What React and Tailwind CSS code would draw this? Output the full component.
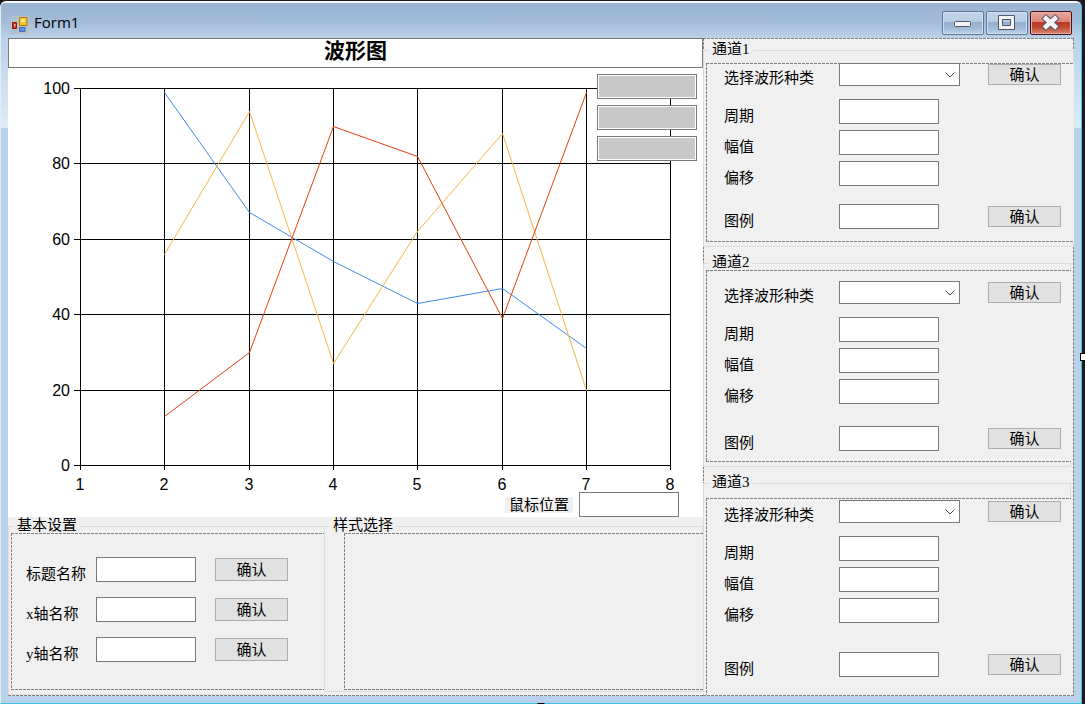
import { useId, useState } from "react";

const buttonClass = "w-[73px] border border-[#adadad] bg-[#e1e1e1] text-[15px] leading-4 hover:border-[#0078d7] hover:bg-[#e5f1fb]";
const inputClass = "h-[25px] w-[100px] border border-[#7a7a7a] bg-white px-1 text-[15px] outline-none";

// 3px on / 1px off outlines
const dashedPanel =
  "[background-image:repeating-linear-gradient(90deg,#828282_0_3px,transparent_3px_4px),repeating-linear-gradient(180deg,#828282_0_3px,transparent_3px_4px),repeating-linear-gradient(90deg,#828282_0_3px,transparent_3px_4px)] [background-position:top_left,top_left,bottom_left] [background-size:100%_1px,1px_100%,100%_1px] bg-no-repeat";
const dashedOpen =
  "[background-image:repeating-linear-gradient(90deg,#828282_0_3px,transparent_3px_4px),repeating-linear-gradient(180deg,#828282_0_3px,transparent_3px_4px)] [background-size:100%_1px,1px_100%] bg-no-repeat";
const dashedBottom =
  "[background-image:repeating-linear-gradient(90deg,#828282_0_3px,transparent_3px_4px)] [background-position:bottom_left] [background-size:100%_1px] bg-no-repeat";
const dashedFrame =
  "[background-image:repeating-linear-gradient(90deg,#828282_0_3px,transparent_3px_4px),repeating-linear-gradient(180deg,#828282_0_3px,transparent_3px_4px),repeating-linear-gradient(180deg,#828282_0_3px,transparent_3px_4px),repeating-linear-gradient(90deg,#828282_0_3px,transparent_3px_4px)] [background-position:top_left,top_left,top_right,bottom_left] [background-size:100%_1px,1px_100%,1px_100%,100%_1px] bg-no-repeat";

const series = [
  { color: "#418cf0", values: [99, 67, 54, 43, 47, 31] },
  { color: "#fcb441", values: [56, 94, 27, 62, 88, 20] },
  { color: "#e0400a", values: [13, 30, 90, 82, 39, 99] },
];

const channels = [
  { name: "通道1", group: "-mr-px border-b pb-1", panel: "mt-1.5 pb-[13px]", outline: dashedPanel, last: "mt-[18px]" },
  { name: "通道2", group: "mr-0.5 border-b pb-1", panel: "pt-[11px] pb-[11px]", outline: dashedPanel, last: "mt-[22px]" },
  { name: "通道3", group: "mr-0.5 flex-1", panel: "mt-2 flex-1 pt-0.5", outline: dashedOpen, last: "mt-[29px]" },
];

export default function App() {
  return (
    <div className="flex min-h-screen flex-col bg-[#1c1a1e] pt-px pr-[3px] font-['Liberation_Serif','Noto_Sans_CJK_SC',serif] text-[15px] text-black">
      <div className="relative flex flex-1 flex-col rounded-t-md border-t-2 border-r border-b border-l border-t-[#f4f8fc] border-r-[#3cc3e0] border-b-[#3cc3e0] border-l-[#e4edf6] bg-[#b9d1ea]">
        <TitleBar />
        <div className="flex flex-1 bg-[linear-gradient(180deg,#b9d1ea_0,#dfebf7_90px,#b9d1ea_90px)] px-[7px] pb-[7px]">
          <div className="flex flex-1 bg-[#f0f0f0]">
            <main className="flex min-w-0 flex-1 flex-col">
              <input aria-label="标题" defaultValue="波形图" className="h-[30px] w-full border border-[#7a7a7a] bg-white pb-0.5 text-center text-[21px] font-bold outline-none" />
              <Chart />
              <div className={`flex flex-1 ${dashedBottom}`}>
                <BasicSettings />
                <StylePicker />
              </div>
            </main>
            <aside className={`flex w-[371px] flex-col gap-[9px] px-px pt-[5px] pb-px ${dashedFrame}`}>
              {channels.map((c) => <Channel key={c.name} {...c} />)}
            </aside>
          </div>
        </div>
        <span className="absolute top-1/2 -right-1 h-2 w-[5px] border border-r-0 border-black bg-white" />
        <span className="absolute -bottom-px left-1/2 h-px w-[7px] -translate-x-1/2 bg-black" />
      </div>
    </div>
  );
}

function TitleBar() {
  return (
    <header className="flex h-[35px] items-center rounded-t bg-linear-to-b from-[#98b3d2] via-[#a2bbd7] to-[#b9d1ea] pr-[9px] pl-2.5">
      <FormIcon />
      <h1 className="ml-[5px] flex-1 pt-[3px] font-['Open_Sans',sans-serif] text-[15px] leading-5">Form1</h1>
      <div className="flex gap-0.5 pt-1">
        <CaptionButton label="最小化">
          <rect x="11.5" y="9.5" width="16" height="5" rx="1" fill="#f4f4f4" stroke="#535666" />
        </CaptionButton>
        <CaptionButton label="最大化">
          <path d="M11.5 3.5h16v14h-16z M15.5 7.5v6h8v-6z" fill="#f4f4f4" fillRule="evenodd" stroke="#535666" strokeLinejoin="round" />
        </CaptionButton>
        <CaptionButton label="关闭" danger>
          <path d="M15 6.500l9 8M24 6.500l-9 8" fill="none" stroke="#535666" strokeWidth="6.5" strokeLinecap="square" />
          <path d="M15 6.500l9 8M24 6.500l-9 8" fill="none" stroke="#f6f6f6" strokeWidth="4.5" strokeLinecap="square" />
        </CaptionButton>
      </div>
    </header>
  );
}

function CaptionButton({ label, danger, children }) {
  const tone = danger
    ? "border-[#43141c] bg-[linear-gradient(180deg,#e9a89d_0%,#d9847a_45%,#b73a25_46%,#c04a32_70%,#d98873_100%)] shadow-[inset_0_0_0_1px_#e9aa9f]"
    : "border-[#62768f] bg-[linear-gradient(180deg,#c2d6ea_0%,#b4cce3_45%,#95b0cc_46%,#a2bcd8_75%,#bad2ec_100%)] shadow-[inset_0_0_0_1px_#cfe0f1]";
  return (
    <button aria-label={label} className={`h-6 w-[42px] rounded-xs border ${tone}`}>
      <svg viewBox="0 0 40 22" className="block h-[22px] w-10">{children}</svg>
    </button>
  );
}

function FormIcon() {
  return (
    <svg viewBox="0 0 18 18" className="mt-2 h-[18px] w-[18px]" aria-hidden="true">
      <path d="M0 0h18v18H0z" fill="#bcc0c4" />
      <path d="M1 1h5v4H1z M1 14h5v3H1z" fill="#a9bfd8" />
      <path d="M1.500 6.500h4v6h-4z" fill="#c5331e" stroke="#8c1a10" />
      <path d="M3 8h1.500v2.500H3z" fill="#f3b5a8" />
      <path d="M8.500 1.500h7.500v8h-7.500z" fill="#f7c52e" stroke="#a87a08" />
      <path d="M10 3h4v3h-4z" fill="#fde68a" />
      <path d="M8.500 11.500h5.500v4h-5.500z" fill="#5b94e6" stroke="#3a6cc0" />
    </svg>
  );
}

function Chart() {
  const id = useId();
  const px = (v) => 72 + Math.round((v - 1) * 84.3);
  const py = (v) => 397 - Math.round(v * 3.77);
  const xs = [1, 2, 3, 4, 5, 6, 7, 8];
  const ys = [0, 20, 40, 60, 80, 100];

  return (
    <section className="relative bg-white">
      <svg viewBox="0 0 695 449" className="block w-full" fontFamily="Liberation Sans, sans-serif" fontSize="16">
        <g stroke="#000" shapeRendering="crispEdges">
          {xs.map((v) => <line key={v} x1={px(v) + 0.5} x2={px(v) + 0.5} y1="20" y2="402" />)}
          {ys.map((v) => <line key={v} x1="66" x2="663" y1={py(v) + 0.5} y2={py(v) + 0.5} />)}
        </g>
        {ys.map((v) => <text key={v} x="62" y={py(v) + 6} textAnchor="end">{v}</text>)}
        {xs.map((v) => <text key={v} x={px(v)} y="422" textAnchor="middle">{v}</text>)}
        {series.map((s) => (
          <polyline
            key={s.color} fill="none" stroke={s.color}
            points={s.values.map((v, i) => `${px(i + 2) + 0.5},${py(v) + 0.5}`).join(" ")}
          />
        ))}
      </svg>
      <div className="absolute top-1.5 right-1.5 flex flex-col gap-1.5">
        {[1, 2, 3].map((n) => (
          <input key={n} aria-label={`图例${n}`} className="h-[25px] w-[100px] border border-[#7a7a7a] bg-[#c8c8c8] px-1 shadow-[inset_0_0_0_1px_#fff] outline-none" />
        ))}
      </div>
      <div className="absolute right-6 bottom-0 flex items-center gap-1.5">
        <label htmlFor={id} className="bg-[#f0f0f0] px-1 leading-4">鼠标位置</label>
        <input id={id} className={inputClass} />
      </div>
    </section>
  );
}

function Legend({ children }) {
  return <legend className="ml-[3px] h-3.5 px-[3px] leading-3">{children}</legend>;
}

function BasicSettings() {
  return (
    <fieldset className="mt-0.5 mb-px flex w-[316px] flex-col border border-r-0 border-[#dcdcdc] bg-[#f0f0f0] pb-1 pl-0.5">
      <Legend>基本设置</Legend>
      <div className={`flex flex-1 flex-col gap-[15px] pt-6 pl-[15px] ${dashedPanel}`}>
        {["标题名称", "x轴名称", "y轴名称"].map((name) => <SettingRow key={name} name={name} />)}
      </div>
    </fieldset>
  );
}

function SettingRow({ name }) {
  const id = useId();
  const [value, setValue] = useState("");
  return (
    <div className="grid grid-cols-[70px_119px_73px] items-center">
      <label htmlFor={id} className="pt-2 leading-4">{name}</label>
      <input id={id} value={value} onChange={(e) => setValue(e.target.value)} className={inputClass} />
      <button className={`h-[23px] ${buttonClass}`}>确认</button>
    </div>
  );
}

function StylePicker() {
  return (
    <fieldset className="mt-0.5 mb-1 flex min-w-0 flex-1 flex-col border border-[#dcdcdc] pb-px pl-0.5">
      <Legend>样式选择</Legend>
      <div className={`-mr-px ml-[17px] flex-1 bg-[#f0f0f0] ${dashedPanel}`} />
    </fieldset>
  );
}

function Channel({ name, group, panel, outline, last }) {
  const id = useId();
  return (
    <fieldset className={`-ml-px flex flex-col border-t border-r border-l border-[#dcdcdc] bg-[#f0f0f0] pl-0.5 ${group}`}>
      <Legend>{name}</Legend>
      <div className={`-mr-px flex flex-col bg-[#f0f0f0] pl-[18px] ${outline} ${panel}`}>
        <div className="grid grid-cols-[115px_149px_73px] items-center">
          <label htmlFor={`${id}-wave`} className="pt-[7px] leading-4">选择波形种类</label>
          <div className="relative w-[121px]">
            <select id={`${id}-wave`} className="block h-[23px] w-full appearance-none border border-[#7a7a7a] bg-white px-1 outline-none" />
            <svg viewBox="0 0 10 6" className="pointer-events-none absolute top-[9px] right-[5px] h-1.5 w-2.5">
              <path d="M.5.5 5 5 9.500.5" fill="none" stroke="#444" />
            </svg>
          </div>
          <button className={`h-[21px] ${buttonClass}`}>确认</button>
        </div>
        <div className="mt-[13px] flex flex-col gap-1.5">
          {["周期", "幅值", "偏移"].map((field) => (
            <div key={field} className="grid grid-cols-[115px_149px] items-center">
              <label htmlFor={`${id}-${field}`} className="pt-2 leading-4">{field}</label>
              <input id={`${id}-${field}`} className={inputClass} />
            </div>
          ))}
        </div>
        <div className={`grid grid-cols-[115px_149px_73px] items-center ${last}`}>
          <label htmlFor={`${id}-legend`} className="pt-2 leading-4">图例</label>
          <input id={`${id}-legend`} className={inputClass} />
          <button className={`h-[21px] ${buttonClass}`}>确认</button>
        </div>
      </div>
    </fieldset>
  );
}
